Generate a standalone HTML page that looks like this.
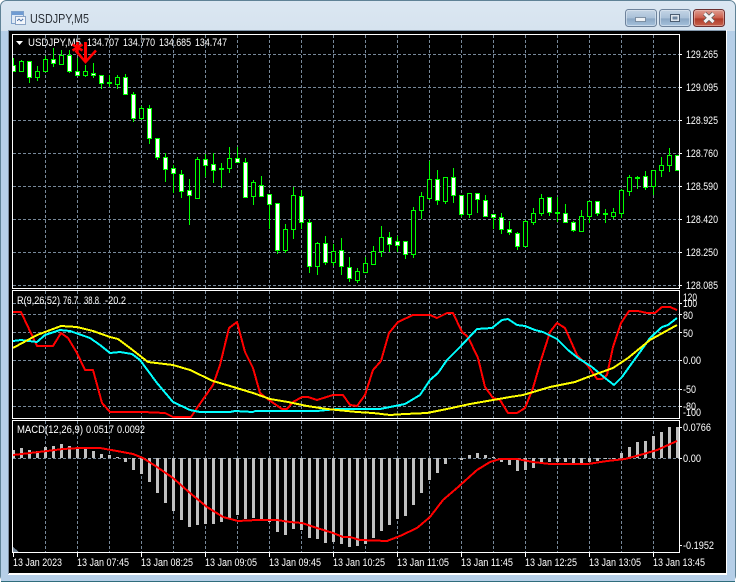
<!DOCTYPE html>
<html><head><meta charset="utf-8"><title>USDJPY,M5</title>
<style>html,body{margin:0;padding:0;background:#fff}svg{display:block}text{font-family:"Liberation Sans",sans-serif;font-size:11px;fill:#fff}</style>
</head><body>
<svg width="737" height="583" viewBox="0 0 737 583" xmlns="http://www.w3.org/2000/svg">
<defs>
<linearGradient id="t" x1="0" y1="0" x2="0" y2="1"><stop offset="0" stop-color="#dbe7f2"/><stop offset=".06" stop-color="#d5e2ee"/><stop offset="1" stop-color="#b4cde6"/></linearGradient>
<linearGradient id="b" x1="0" y1="0" x2="0" y2="1"><stop offset="0" stop-color="#c6d6e6"/><stop offset=".5" stop-color="#a9c0d8"/><stop offset=".55" stop-color="#8ba7c4"/><stop offset="1" stop-color="#a8c4de"/></linearGradient>
<linearGradient id="c" x1="0" y1="0" x2="0" y2="1"><stop offset="0" stop-color="#e0a196"/><stop offset=".5" stop-color="#cb5e4c"/><stop offset=".55" stop-color="#b03a28"/><stop offset="1" stop-color="#c9664f"/></linearGradient>
<clipPath id="p1"><rect x="13" y="35" width="666" height="253"/></clipPath>
<clipPath id="p2"><rect x="13" y="291" width="666" height="127"/></clipPath>
<clipPath id="p3"><rect x="13" y="421" width="666" height="131"/></clipPath>
</defs>
<rect x=".5" y=".5" width="735" height="581" rx="6" fill="url(#t)" stroke="#5f8296"/>
<rect x="1" y="31" width="734" height="550" fill="#b6cfe8"/>
<path d="M1 581.5H735" stroke="#2f6d7c"/>
<rect x="8" y="30" width="719" height="545" fill="#fff"/>
<rect x="8" y="30" width="1" height="544" fill="#7d8ea0"/>
<rect x="8" y="30" width="718" height="1" fill="#8296aa"/>
<rect x="9" y="31" width="717" height="542" fill="#000"/>

<g fill="none" stroke="#778899" stroke-dasharray="3 2" shape-rendering="crispEdges">
<path d="M13 54.5H679M13 87.5H679M13 120.5H679M13 153.5H679M13 186.5H679M13 219.5H679M13 252.5H679M13 285.5H679"/>
<path d="M45.5 35V288M77.5 35V288M109.5 35V288M141.5 35V288M173.5 35V288M205.5 35V288M237.5 35V288M269.5 35V288M301.5 35V288M333.5 35V288M365.5 35V288M397.5 35V288M429.5 35V288M461.5 35V288M493.5 35V288M525.5 35V288M557.5 35V288M589.5 35V288M621.5 35V288M653.5 35V288"/>
<path d="M13 303.5H679M13 314.5H679M13 332.5H679M13 360.5H679M13 389.5H679M13 406.5H679"/>
<path d="M45.5 291V418M77.5 291V418M109.5 291V418M141.5 291V418M173.5 291V418M205.5 291V418M237.5 291V418M269.5 291V418M301.5 291V418M333.5 291V418M365.5 291V418M397.5 291V418M429.5 291V418M461.5 291V418M493.5 291V418M525.5 291V418M557.5 291V418M589.5 291V418M621.5 291V418M653.5 291V418"/>
<path d="M13 458.5H679"/>
<path d="M45.5 421V552M77.5 421V552M109.5 421V552M141.5 421V552M173.5 421V552M205.5 421V552M237.5 421V552M269.5 421V552M301.5 421V552M333.5 421V552M365.5 421V552M397.5 421V552M429.5 421V552M461.5 421V552M493.5 421V552M525.5 421V552M557.5 421V552M589.5 421V552M621.5 421V552M653.5 421V552"/>
</g>

<g clip-path="url(#p1)" shape-rendering="crispEdges">
<path fill="none" stroke="#00ff00" d="M13.5 58V72M21.5 60V72M29.5 61V83M37.5 66V81M45.5 56V72M53.5 48V67M61.5 50V65M69.5 50V73M77.5 58V76M85.5 65V77M93.5 63V78M101.5 75V89M109.5 75V87M117.5 75V89M125.5 74V94M133.5 92V122M141.5 106V120M149.5 105V144M157.5 138V160M165.5 153V182M173.5 165V193M181.5 170V198M189.5 179V225M197.5 157V199M205.5 154V177M213.5 153V183M221.5 163V188M229.5 147V173M237.5 147V163M245.5 158V198M253.5 180V205M261.5 176V196M269.5 194V229M277.5 203V254M285.5 224V253M293.5 187V239M301.5 190V229M309.5 219V273M317.5 242V275M325.5 236V265M333.5 244V266M341.5 238V275M349.5 257V282M357.5 268V283M365.5 257V273M373.5 246V264M381.5 226V257M389.5 232V252M397.5 236V252M405.5 241V259M413.5 207V258M421.5 192V219M429.5 161V200M437.5 170V205M445.5 177V204M453.5 168V203M461.5 195V217M469.5 193V218M477.5 193V213M485.5 195V217M493.5 214V229M501.5 213V234M509.5 221V235M517.5 232V250M525.5 220V247M533.5 208V225M541.5 194V216M549.5 197V216M557.5 197V222M565.5 204V223M573.5 221V232M581.5 210V232M589.5 201V223M597.5 201V216M605.5 209V223M613.5 208V219M621.5 189V218M629.5 175V196M637.5 176V189M645.5 171V190M653.5 170V195M661.5 157V177M669.5 148V172"/>
<path fill="#fff" stroke="#00ff00" d="M11.5 65.5h4V71.5h-4zM27.5 61.5h4V77.5h-4zM51.5 59.5h4V63.5h-4zM67.5 55.5h4V71.5h-4zM75.5 71.5h4V75.5h-4zM91.5 73.5h4V75.5h-4zM99.5 75.5h4V83.5h-4zM107.5 82.5h4V83.5h-4zM123.5 77.5h4V94.5h-4zM131.5 94.5h4V118.5h-4zM147.5 108.5h4V138.5h-4zM155.5 138.5h4V157.5h-4zM163.5 157.5h4V169.5h-4zM171.5 168.5h4V173.5h-4zM179.5 174.5h4V191.5h-4zM187.5 190.5h4V195.5h-4zM203.5 159.5h4V165.5h-4zM211.5 164.5h4V170.5h-4zM219.5 168.5h4V169.5h-4zM235.5 158.5h4V162.5h-4zM243.5 162.5h4V197.5h-4zM259.5 185.5h4V196.5h-4zM267.5 194.5h4V204.5h-4zM275.5 203.5h4V250.5h-4zM299.5 196.5h4V222.5h-4zM307.5 222.5h4V266.5h-4zM323.5 243.5h4V262.5h-4zM339.5 250.5h4V266.5h-4zM347.5 267.5h4V278.5h-4zM387.5 237.5h4V244.5h-4zM395.5 241.5h4V245.5h-4zM403.5 241.5h4V254.5h-4zM435.5 179.5h4V200.5h-4zM451.5 177.5h4V195.5h-4zM459.5 195.5h4V214.5h-4zM475.5 193.5h4V199.5h-4zM483.5 200.5h4V216.5h-4zM491.5 214.5h4V217.5h-4zM499.5 217.5h4V229.5h-4zM507.5 229.5h4V232.5h-4zM515.5 233.5h4V246.5h-4zM547.5 197.5h4V212.5h-4zM555.5 212.5h4V213.5h-4zM563.5 213.5h4V222.5h-4zM571.5 222.5h4V230.5h-4zM595.5 201.5h4V213.5h-4zM603.5 213.5h4V214.5h-4zM643.5 176.5h4V187.5h-4zM675.5 155.5h4V170.5h-4z"/>
<path fill="#000" stroke="#00ff00" d="M19.5 61.5h4V71.5h-4zM35.5 71.5h4V77.5h-4zM43.5 59.5h4V71.5h-4zM59.5 55.5h4V64.5h-4zM83.5 71.5h4V75.5h-4zM115.5 77.5h4V84.5h-4zM139.5 108.5h4V118.5h-4zM195.5 159.5h4V198.5h-4zM227.5 158.5h4V168.5h-4zM251.5 182.5h4V196.5h-4zM283.5 229.5h4V250.5h-4zM291.5 195.5h4V229.5h-4zM315.5 243.5h4V266.5h-4zM331.5 251.5h4V262.5h-4zM355.5 271.5h4V280.5h-4zM363.5 263.5h4V272.5h-4zM371.5 251.5h4V264.5h-4zM379.5 237.5h4V251.5h-4zM411.5 210.5h4V254.5h-4zM419.5 196.5h4V210.5h-4zM427.5 179.5h4V198.5h-4zM443.5 177.5h4V201.5h-4zM467.5 193.5h4V214.5h-4zM523.5 221.5h4V246.5h-4zM531.5 213.5h4V222.5h-4zM539.5 198.5h4V213.5h-4zM579.5 216.5h4V231.5h-4zM587.5 201.5h4V216.5h-4zM611.5 212.5h4V216.5h-4zM619.5 190.5h4V213.5h-4zM627.5 177.5h4V191.5h-4zM635.5 177.5h4V178.5h-4zM651.5 170.5h4V186.5h-4zM659.5 165.5h4V170.5h-4zM667.5 155.5h4V165.5h-4z"/>
</g>

<g clip-path="url(#p2)" fill="none" stroke-width="2" shape-rendering="crispEdges" stroke-linejoin="round">
<polyline stroke="#ff0000" points="13,312 21,312 37,346 53,346 61,333 68,338 77,353 85,370 93,370 102,403 110,412 143,412 165,413 173,417 191,417 197,408 213,385 220,365 229,328 237,322 245,352 253,368 260,393 269,400 282,409 287,409 293,402 302,397 308,397 317,400 333,395 343,395 350,405 357,406 365,395 373,370 381,361 389,333 398,322 413,315 430,315 437,318 447,313 453,313 462,332 468,337 478,358 485,387 493,398 500,400 508,413 517,413 525,408 533,388 542,357 550,332 557,323 565,328 577,355 588,366 597,379 602,379 607,375 613,347 621,323 629,311 638,311 647,313 655,313 662,307 670,307 677,310"/>
<polyline stroke="#00ffff" points="13,341 21,340 37,342 45,335 60,330 70,331 90,338 100,345 110,353 120,352 132,354 140,360 157,383 173,402 190,410 200,412 230,412 235,411 253,412 255,411 317,411 337,409 380,409 405,404 420,395 430,380 438,373 447,360 460,347 477,329 492,328 502,320 508,319 517,325 525,326 535,330 543,332 557,339 568,350 578,358 592,367 605,378 614,385 622,377 632,363 640,352 650,338 662,327 668,325 677,318"/>
<polyline stroke="#ffff00" points="13,348 37,335 53,329 61,326 77,327 93,331 110,337 118,339 130,348 148,362 173,365 190,370 213,381 230,386 253,393 270,399 288,402 307,406 327,409 357,412 373,413 390,415 405,414 427,413 447,409 470,404 493,400 510,397 523,395 550,387 575,382 588,377 613,368 628,358 650,340 677,325"/>
</g>

<g clip-path="url(#p3)" shape-rendering="crispEdges">
<path fill="none" stroke="#c0c0c0" stroke-width="3" d="M13.500 458V450M21.500 458V448M29.500 458V450M37.500 458V451M45.500 458V447M53.500 458V446M61.500 458V444M69.500 458V446M77.500 458V448M85.500 458V449M93.500 458V451M101.500 458V454M109.500 458V455M117.500 458V457M125.500 458V462M133.500 458V470M141.500 458V474M149.500 458V482M157.500 458V493M165.500 458V503M173.500 458V511M181.500 458V520M189.500 458V527M197.500 458V525M205.500 458V524M213.500 458V524M221.500 458V522M229.500 458V518M237.500 458V515M245.500 458V519M253.500 458V518M261.500 458V519M269.500 458V522M277.500 458V532M285.500 458V535M293.500 458V529M301.500 458V530M309.500 458V538M317.500 458V539M325.500 458V543M333.500 458V542M341.500 458V544M349.500 458V547M357.500 458V546M365.500 458V544M373.500 458V538M381.500 458V531M389.500 458V525M397.500 458V519M405.500 458V516M413.500 458V505M421.500 458V493M429.500 458V480M437.500 458V473M445.500 458V464M461.500 458V460M469.500 458V455M477.500 458V453M485.500 458V455M493.500 458V457M501.500 458V462M509.500 458V465M517.500 458V471M525.500 458V470M533.500 458V468M541.500 458V463M549.500 458V462M557.500 458V462M565.500 458V462M573.500 458V463M581.500 458V463M589.500 458V462M597.500 458V461M605.500 458V459M613.500 458V459M621.500 458V453M629.500 458V447M637.500 458V442M645.500 458V441M653.500 458V436M661.500 458V432M669.500 458V427M677.500 458V427"/>
<polyline fill="none" stroke="#ff0000" stroke-width="2" points="13,455 30,453 47,451 63,449 80,448 100,448 117,451 133,454 143,458 157,467 173,478 190,493 207,507 223,517 238,521 257,520 277,520 290,522 302,523 317,528 333,533 343,537 350,537 360,540 387,541 400,536 417,528 430,517 443,500 457,488 477,470 490,462 500,459 517,459 533,462 550,464 588,464 607,461 625,459 640,455 657,450 677,441"/>
<path d="M13 547L19 552H13z" fill="#778899"/>
</g>

<g fill="none" stroke="#fff" shape-rendering="crispEdges">
<rect x="12.500" y="34.500" width="667" height="254"/>
<rect x="12.500" y="290.500" width="667" height="128"/>
<rect x="12.500" y="420.500" width="667" height="132"/>
<path d="M679 54.500h3M679 87.500h3M679 120.500h3M679 153.500h3M679 186.500h3M679 219.500h3M679 252.500h3M679 285.500h3M679 303.500h3M679 314.500h3M679 332.500h3M679 360.500h3M679 389.500h3M679 406.500h3M679 427.500h3M679 458.500h3M679 545.500h3"/>
<path d="M13.500 552v5M77.500 552v5M141.500 552v5M205.500 552v5M269.500 552v5M333.500 552v5M397.500 552v5M461.500 552v5M525.500 552v5M589.500 552v5M653.500 552v5"/>
</g>
<path d="M16 41h7l-3.500 4z" fill="#fff"/>

<g>
<text x="28" y="46" textLength="53" lengthAdjust="spacingAndGlyphs">USDJPY,M5</text>
<text x="87" y="46" textLength="32" lengthAdjust="spacingAndGlyphs">134.707</text>
<text x="123" y="46" textLength="32" lengthAdjust="spacingAndGlyphs">134.770</text>
<text x="159" y="46" textLength="32" lengthAdjust="spacingAndGlyphs">134.685</text>
<text x="195" y="46" textLength="32" lengthAdjust="spacingAndGlyphs">134.747</text>
<text x="17" y="304" textLength="43" lengthAdjust="spacingAndGlyphs">R(9,26,52)</text>
<text x="63" y="304" textLength="15" lengthAdjust="spacingAndGlyphs">76.7</text>
<text x="84" y="304" textLength="15" lengthAdjust="spacingAndGlyphs">38.8</text>
<text x="105" y="304" textLength="21" lengthAdjust="spacingAndGlyphs">-20.2</text>
<text x="17" y="433" textLength="66" lengthAdjust="spacingAndGlyphs">MACD(12,26,9)</text>
<text x="86" y="433" textLength="28" lengthAdjust="spacingAndGlyphs">0.0517</text>
<text x="117" y="433" textLength="28" lengthAdjust="spacingAndGlyphs">0.0092</text>
<text x="686" y="58" textLength="32" lengthAdjust="spacingAndGlyphs">129.265</text>
<text x="686" y="91" textLength="32" lengthAdjust="spacingAndGlyphs">129.095</text>
<text x="686" y="124" textLength="32" lengthAdjust="spacingAndGlyphs">128.925</text>
<text x="686" y="157" textLength="32" lengthAdjust="spacingAndGlyphs">128.760</text>
<text x="686" y="190" textLength="32" lengthAdjust="spacingAndGlyphs">128.590</text>
<text x="686" y="223" textLength="32" lengthAdjust="spacingAndGlyphs">128.420</text>
<text x="686" y="256" textLength="32" lengthAdjust="spacingAndGlyphs">128.250</text>
<text x="686" y="289" textLength="32" lengthAdjust="spacingAndGlyphs">128.085</text>
<text x="683" y="301" textLength="14" lengthAdjust="spacingAndGlyphs">120</text>
<text x="683" y="307" textLength="14" lengthAdjust="spacingAndGlyphs">100</text>
<text x="683" y="319" textLength="10" lengthAdjust="spacingAndGlyphs">80</text>
<text x="683" y="337" textLength="10" lengthAdjust="spacingAndGlyphs">50</text>
<text x="683" y="364" textLength="18" lengthAdjust="spacingAndGlyphs">0.00</text>
<text x="683" y="393" textLength="13" lengthAdjust="spacingAndGlyphs">-50</text>
<text x="683" y="410" textLength="13" lengthAdjust="spacingAndGlyphs">-80</text>
<text x="683" y="416" textLength="18" lengthAdjust="spacingAndGlyphs">-100</text>
<text x="683" y="431" textLength="28" lengthAdjust="spacingAndGlyphs">0.0766</text>
<text x="683" y="462" textLength="18" lengthAdjust="spacingAndGlyphs">0.00</text>
<text x="683" y="549" textLength="31" lengthAdjust="spacingAndGlyphs">-0.1952</text>
<text x="13" y="566" textLength="49" lengthAdjust="spacingAndGlyphs">13 Jan 2023</text>
<text x="77" y="566" textLength="52" lengthAdjust="spacingAndGlyphs">13 Jan 07:45</text>
<text x="141" y="566" textLength="52" lengthAdjust="spacingAndGlyphs">13 Jan 08:25</text>
<text x="205" y="566" textLength="52" lengthAdjust="spacingAndGlyphs">13 Jan 09:05</text>
<text x="269" y="566" textLength="52" lengthAdjust="spacingAndGlyphs">13 Jan 09:45</text>
<text x="333" y="566" textLength="52" lengthAdjust="spacingAndGlyphs">13 Jan 10:25</text>
<text x="397" y="566" textLength="52" lengthAdjust="spacingAndGlyphs">13 Jan 11:05</text>
<text x="461" y="566" textLength="52" lengthAdjust="spacingAndGlyphs">13 Jan 11:45</text>
<text x="525" y="566" textLength="52" lengthAdjust="spacingAndGlyphs">13 Jan 12:25</text>
<text x="589" y="566" textLength="52" lengthAdjust="spacingAndGlyphs">13 Jan 13:05</text>
<text x="653" y="566" textLength="52" lengthAdjust="spacingAndGlyphs">13 Jan 13:45</text>
</g>

<g fill="none" stroke="#ff0000">
<path stroke-width="3" d="M85.500 42V61"/>
<path stroke-width="2.500" d="M75.500 50.500L85.500 62L96 50.500"/>
<path stroke-width="2.500" d="M77.500 42V53M72.500 44.500L82.500 50.500M82.500 44.500L72.500 50.500"/>
</g>

<text x="30" y="23" textLength="59" lengthAdjust="spacingAndGlyphs" style="font-size:12.500px;fill:#2a2f36">USDJPY,M5</text>
<g shape-rendering="crispEdges">
<rect x="11.500" y="11.500" width="12" height="12" fill="#dfe9f5" stroke="#7fa2cc"/>
<rect x="12" y="12" width="11" height="3" fill="#6f9bd2"/>
<rect x="15.500" y="16.500" width="10" height="8" fill="#f3f6fb" stroke="#8aa3c4"/>
<path d="M17 21l2-2 2 2 2-2" fill="none" stroke="#5a7fb0"/>
</g>

<rect x="625.500" y="9.500" width="31" height="17" rx="3" fill="url(#b)" stroke="#6d829b"/>
<rect x="626.500" y="10.500" width="29" height="15" rx="2" fill="none" stroke="#dfe9f3" stroke-opacity=".6"/>
<rect x="635.500" y="17.500" width="10" height="4" fill="#eef2f6" stroke="#6d7f94" stroke-width=".8"/>
<rect x="659.500" y="9.500" width="31" height="17" rx="3" fill="url(#b)" stroke="#6d829b"/>
<rect x="660.500" y="10.500" width="29" height="15" rx="2" fill="none" stroke="#dfe9f3" stroke-opacity=".6"/>
<rect x="670.500" y="14.500" width="9" height="7" fill="#dfe6ee" stroke="#4b5d72"/>
<rect x="672.500" y="16.500" width="5" height="3" fill="#6f86a0"/>
<rect x="693.500" y="9.500" width="31" height="17" rx="3" fill="url(#c)" stroke="#6c2f30"/>
<rect x="694.500" y="10.500" width="29" height="15" rx="2" fill="none" stroke="#f0c8bf" stroke-opacity=".5"/>
<path d="M704.500 13.500L713.500 22M713.500 13.500L704.500 22" stroke="#5a5a5a" stroke-width="4.500" fill="none"/>
<path d="M704.500 13.500L713.500 22M713.500 13.500L704.500 22" stroke="#f4f4f4" stroke-width="3" fill="none"/>
</svg>
</body></html>
